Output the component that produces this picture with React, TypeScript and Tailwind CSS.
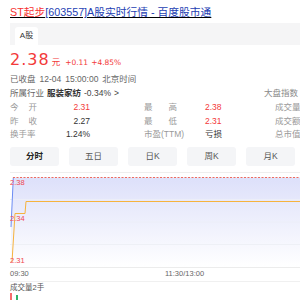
const STATS = [
  { a: ['今', '开'], av: '2.31', ar: true, b: ['最', '高'], bv: '2.38', br: true, c: '成交量' },
  { a: ['昨', '收'], av: '2.27', ar: false, b: ['最', '低'], bv: '2.31', br: true, c: '成交额' },
  { a: ['换手率'], av: '1.24%', ar: false, b: ['市盈(TTM)'], bv: '亏损', br: false, c: '总市值' },
];

const TABS = ['分时', '五日', '日K', '周K', '月K'];

function Label({ parts, w }: { parts: string[]; w: string }) {
  if (parts.length === 1) return <span className="text-[#999]">{parts[0]}</span>;
  return (
    <span className={`flex justify-between text-[#999] ${w}`}>
      {parts.map((p) => (
        <span key={p}>{p}</span>
      ))}
    </span>
  );
}

function Chart() {
  return (
    <div className="relative h-[91px] w-[290px]">
      <svg width="290" height="91" viewBox="0 0 290 91" className="block">
        <defs>
          <linearGradient id="fill" x1="0" y1="0" x2="0" y2="1">
            <stop offset="0%" stopColor="#dde0fa" />
            <stop offset="100%" stopColor="#ffffff" />
          </linearGradient>
        </defs>
        <path d="M1,50 L3.3,0.5 L290,0.5 L290,90 L1,90 Z" fill="url(#fill)" />
        <line x1="0" y1="22.5" x2="290" y2="22.5" stroke="#eceef8" strokeWidth="1" />
        <line x1="0" y1="45" x2="290" y2="45" stroke="#eceef8" strokeWidth="1" />
        <line x1="0" y1="67.5" x2="290" y2="67.5" stroke="#eef0f6" strokeWidth="1" />
        <line x1="0" y1="90.5" x2="290" y2="90.5" stroke="#ececec" strokeWidth="1" />
        <path d="M1,50 L3.3,0.5" fill="none" stroke="#6c8cf3" strokeWidth="1" />
        <path d="M2,85 L5,36.5 L15,36.5 L16,24.5 L290,24.5" fill="none" stroke="#f6b33e" strokeWidth="1" />
        <line x1="3" y1="0.5" x2="290" y2="0.5" stroke="#ee6b5f" strokeWidth="1" strokeDasharray="2 1.5" />
      </svg>
      <span className="absolute left-0 top-[1px] text-[7.5px] leading-[9px] text-[#f0474f]">2.38</span>
      <span className="absolute left-0 top-[37px] text-[7.5px] leading-[9px] text-[#f0474f]">2.34</span>
      <span className="absolute left-0 top-[79px] text-[7.5px] leading-[9px] text-[#f0474f]">2.31</span>
    </div>
  );
}

export default function App() {
  return (
    <div className="h-[300px] w-[300px] overflow-hidden bg-white pl-[10px] [font-family:'Liberation_Sans','Noto_Sans_CJK_SC',sans-serif]">
      {/* title */}
      <div className="mt-[5px] h-[14px] whitespace-nowrap text-[10.75px] leading-[14px] underline">
        <span className="text-[#f73131]">ST起步</span>
        <span className="text-[#2440b3]">[603557]A股实时行情 - 百度股市通</span>
      </div>

      {/* market tab band */}
      <div className="mt-[4px] flex h-[22px] w-[400px] items-end bg-[#f5f5f6] pl-[5px]">
        <div className="flex h-[18px] w-[23px] items-center justify-center rounded-t-[3px] bg-white text-[8px] text-[#333]">
          A股
        </div>
      </div>

      {/* price */}
      <div className="mt-[7px] flex h-[15px] items-baseline whitespace-nowrap leading-[15px] text-[#f33a3a]">
        <span className="[font-family:'DejaVu_Sans',sans-serif] text-[16px] tracking-[1px]">2.38</span>
        <span className="ml-[2px] text-[8.5px]">元</span>
        <span className="ml-[5px] [font-family:'DejaVu_Sans',sans-serif] text-[7.5px]">+0.11</span>
        <span className="ml-[3px] [font-family:'DejaVu_Sans',sans-serif] text-[7.5px]">+4.85%</span>
      </div>

      <div className="mt-[6px] flex h-[13px] items-center gap-[4px] whitespace-nowrap text-[8.5px] leading-[13px] text-[#666]">
        <span>已收盘</span>
        <span>12-04</span>
        <span>15:00:00</span>
        <span>北京时间</span>
      </div>

      <div className="flex h-[14px] items-center whitespace-nowrap text-[8.5px] leading-[14px]">
        <span className="text-[#666]">所属行业</span>
        <span className="ml-[3px] font-bold text-[#333]">服装家纺</span>
        <span className="ml-[3px] text-[#444]">-0.34%</span>
        <span className="ml-[3px] text-[#444]">&gt;</span>
        <span className="ml-auto mr-[2px] text-[#888]">大盘指数</span>
      </div>

      {/* stats */}
      <div className="mt-px flex w-[400px] flex-col text-[8.5px]">
        {STATS.map((r) => (
          <div key={r.c} className="flex h-[13.5px] items-center whitespace-nowrap leading-[13.5px]">
            <span className="w-[27px] shrink-0">
              <Label parts={r.a} w="w-[27px]" />
            </span>
            <span className={`w-[53px] shrink-0 text-right ${r.ar ? 'text-[#f33a3a]' : 'text-[#333]'}`}>{r.av}</span>
            <span className="ml-[54px] w-[61px] shrink-0">
              <Label parts={r.b} w="w-[33px]" />
            </span>
            <span className={`w-[70px] shrink-0 ${r.br ? 'text-[#f33a3a]' : 'text-[#333]'}`}>{r.bv}</span>
            <span className="w-[60px] shrink-0 text-[#999]">{r.c}</span>
          </div>
        ))}
      </div>

      {/* period tabs */}
      <div className="mt-[5.5px] flex gap-[10px]">
        {TABS.map((t, i) => (
          <div
            key={t}
            className={`flex h-[19px] w-[49px] shrink-0 items-center justify-center rounded-[3px] bg-[#f4f5f7] text-[8.5px] ${
              i === 0 ? 'font-bold text-[#222]' : 'text-[#555]'
            }`}
          >
            {t}
          </div>
        ))}
      </div>

      <div className="mt-[6px] h-px w-[290px] bg-[#eeeeee]" />

      <div className="mt-[4px]">
        <Chart />
      </div>

      <div className="relative h-[12px] text-[7.5px] leading-[12px] text-[#666]">
        <span>09:30</span>
        <span className="absolute left-[155px] top-0">11:30/13:00</span>
      </div>

      <div className="mt-px h-px w-[290px] bg-[#f0f0f0]" />

      <div className="mt-px h-[10px] text-[7.5px] leading-[10px] text-[#555]">成交量2手</div>

      <div className="mt-[-1px] flex h-[8px] items-end gap-[4px]">
        <div className="h-[7px] w-[2px] bg-[#f56c6c]" />
        <div className="h-[5px] w-[1.5px] bg-[#2fb36a]" />
      </div>
    </div>
  );
}
